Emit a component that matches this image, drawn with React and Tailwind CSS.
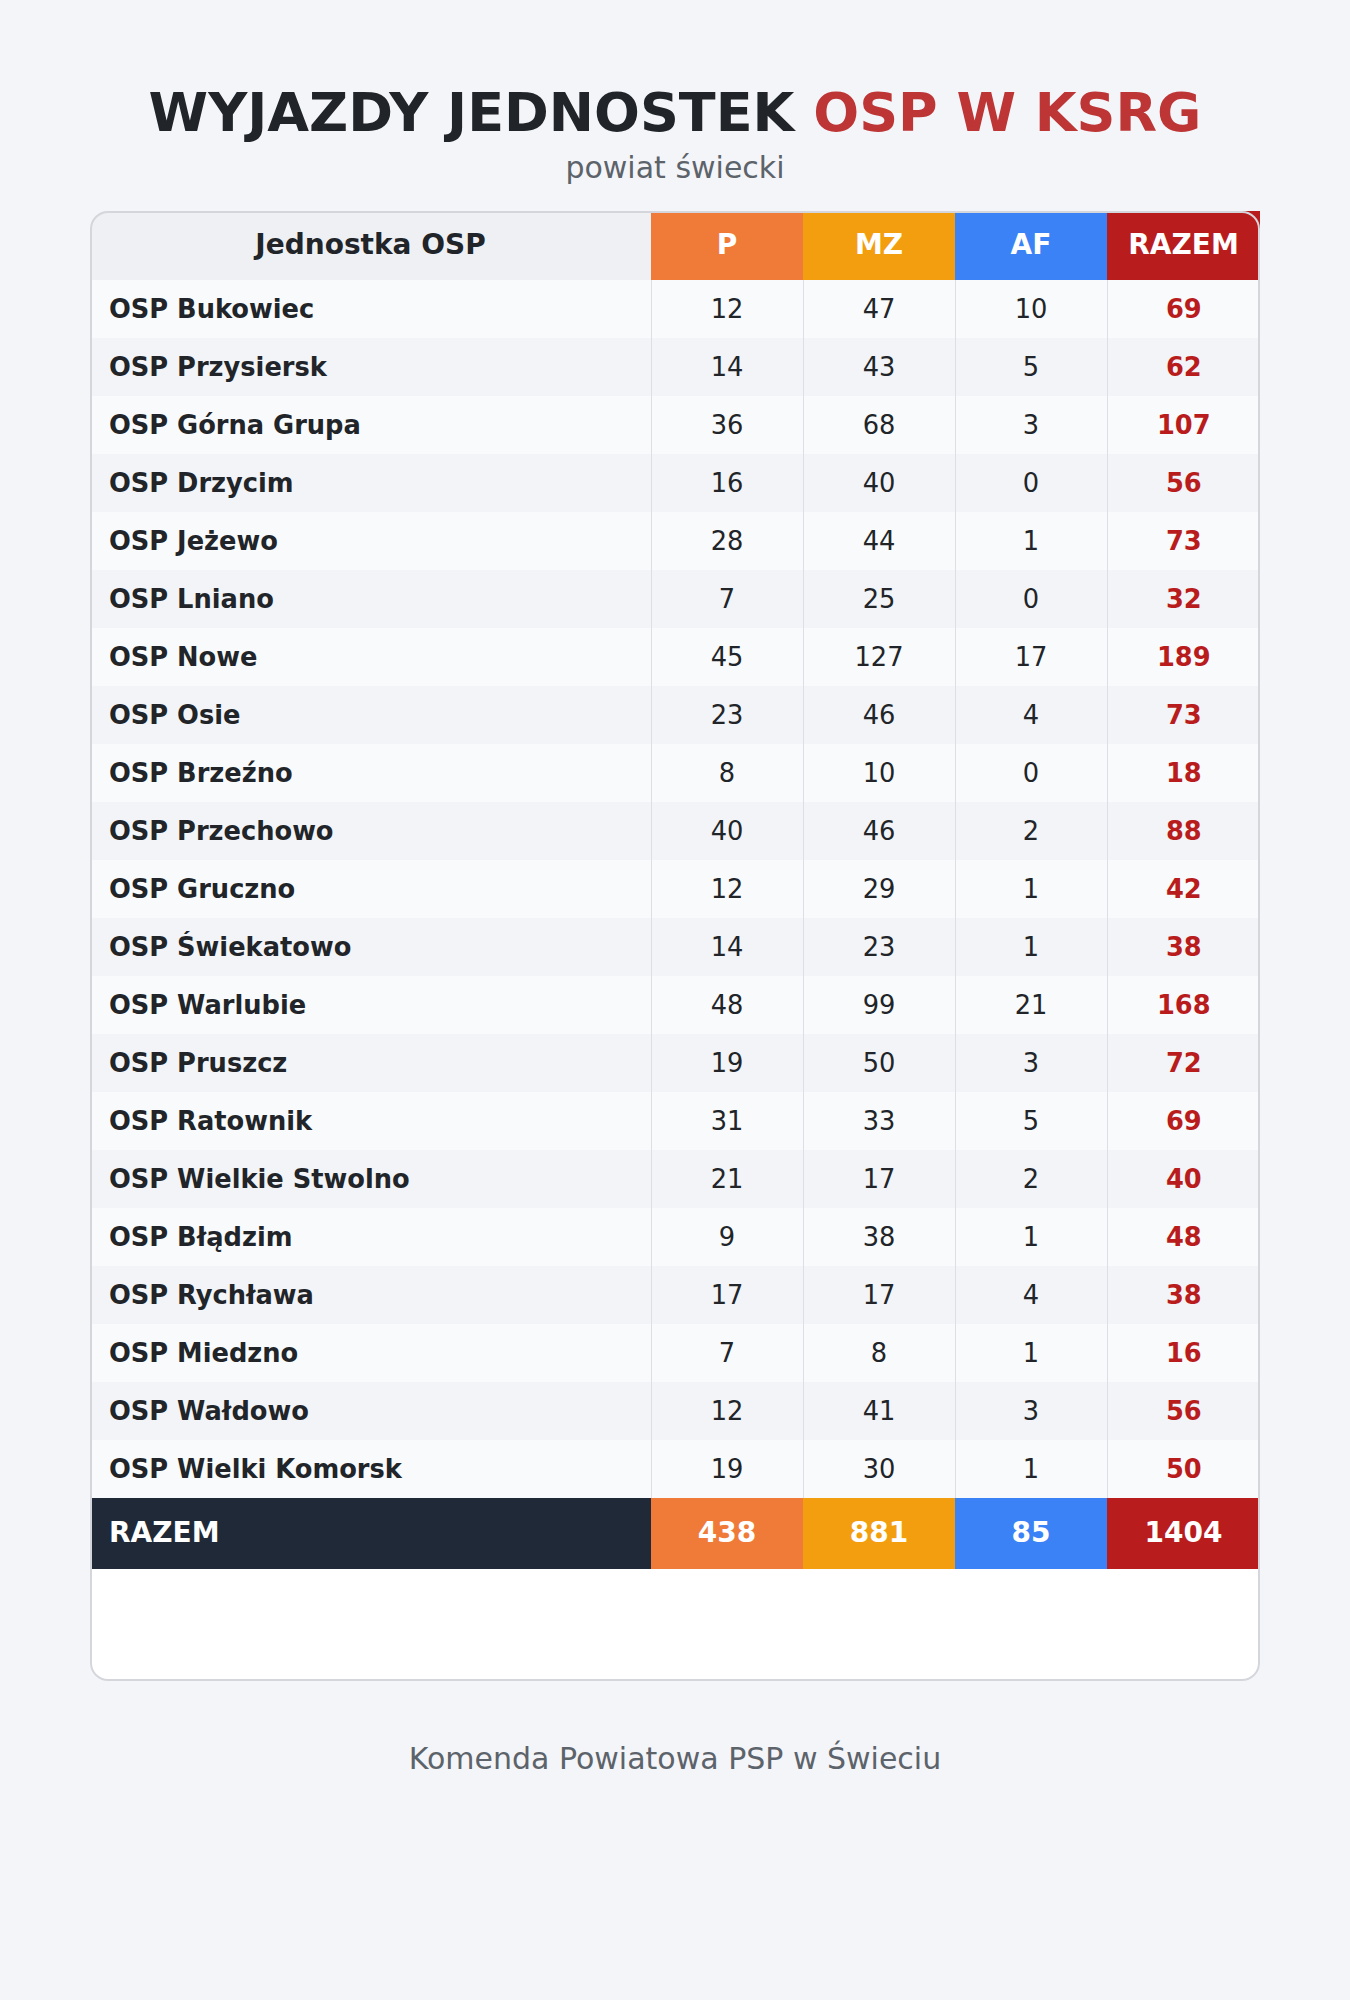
import React from 'react';

const rows = [
    ['OSP Bukowiec', 12, 47, 10, 69],
    ['OSP Przysiersk', 14, 43, 5, 62],
    ['OSP Górna Grupa', 36, 68, 3, 107],
    ['OSP Drzycim', 16, 40, 0, 56],
    ['OSP Jeżewo', 28, 44, 1, 73],
    ['OSP Lniano', 7, 25, 0, 32],
    ['OSP Nowe', 45, 127, 17, 189],
    ['OSP Osie', 23, 46, 4, 73],
    ['OSP Brzeźno', 8, 10, 0, 18],
    ['OSP Przechowo', 40, 46, 2, 88],
    ['OSP Gruczno', 12, 29, 1, 42],
    ['OSP Świekatowo', 14, 23, 1, 38],
    ['OSP Warlubie', 48, 99, 21, 168],
    ['OSP Pruszcz', 19, 50, 3, 72],
    ['OSP Ratownik', 31, 33, 5, 69],
    ['OSP Wielkie Stwolno', 21, 17, 2, 40],
    ['OSP Błądzim', 9, 38, 1, 48],
    ['OSP Rychława', 17, 17, 4, 38],
    ['OSP Miedzno', 7, 8, 1, 16],
    ['OSP Wałdowo', 12, 41, 3, 56],
    ['OSP Wielki Komorsk', 19, 30, 1, 50],
];

const totals = [438, 881, 85, 1404];

const App = () => {
    return (
        <div className="min-h-screen bg-[#f4f5f9] pt-[81px] pb-20 font-['DejaVu_Sans',sans-serif] text-[#212529]">
            {/* Header */}
            <h1 className="text-center text-[54px] leading-[1.2] font-bold">
                WYJAZDY JEDNOSTEK <span className="text-[#bd3535]">OSP W KSRG</span>
            </h1>
            <p className="mt-[4px] text-center text-[30px] leading-[1.2] text-[#5c636a]">powiat świecki</p>

            {/* Table card */}
            <div className="relative mx-auto mt-[25px] w-[1170px] rounded-[18px] bg-white pb-[112px]">
                <table className="w-full table-fixed border-collapse text-[25.7px]">
                    <colgroup>
                        <col className="w-[561px]" />
                        <col className="w-[152px]" />
                        <col className="w-[152px]" />
                        <col className="w-[152px]" />
                        <col className="w-[153px]" />
                    </colgroup>
                    <thead>
                        <tr className="h-[69px] text-[28px] font-bold">
                            <th className="rounded-tl-[18px] bg-[#eef0f3] text-center">Jednostka OSP</th>
                            <th className="bg-[#f07a37] text-white">P</th>
                            <th className="bg-[#f39e0e] text-white">MZ</th>
                            <th className="bg-[#3b82f6] text-white">AF</th>
                            <th className="bg-[#b91c1c] text-white">RAZEM</th>
                        </tr>
                    </thead>
                    <tbody>
                        {rows.map((r, i) => (
                            <tr key={r[0]} className={`h-[58px] ${i % 2 === 0 ? 'bg-[#f9fafb]' : 'bg-[#f3f4f7]'}`}>
                                <td className="pl-[19px] font-bold">{r[0]}</td>
                                <td className="border-l border-[#dcdfe3] text-center">{r[1]}</td>
                                <td className="border-l border-[#dcdfe3] text-center">{r[2]}</td>
                                <td className="border-l border-[#dcdfe3] text-center">{r[3]}</td>
                                <td className="border-l border-[#dcdfe3] text-center font-bold text-[#b91c1c]">{r[4]}</td>
                            </tr>
                        ))}
                        <tr className="h-[71px] text-[28px] font-bold text-white">
                            <td className="bg-[#1f2937] pl-[19px]">RAZEM</td>
                            <td className="bg-[#f07a37] text-center">{totals[0]}</td>
                            <td className="bg-[#f39e0e] text-center">{totals[1]}</td>
                            <td className="bg-[#3b82f6] text-center">{totals[2]}</td>
                            <td className="bg-[#b91c1c] text-center">{totals[3]}</td>
                        </tr>
                    </tbody>
                </table>
                <div className="pointer-events-none absolute inset-0 rounded-[18px] border-2 border-[#d4d6db]"></div>
            </div>

            <p className="mt-[60px] text-center text-[30px] leading-[1.2] text-[#5c636a]">Komenda Powiatowa PSP w Świeciu</p>
        </div>
    );
};

export default App;
